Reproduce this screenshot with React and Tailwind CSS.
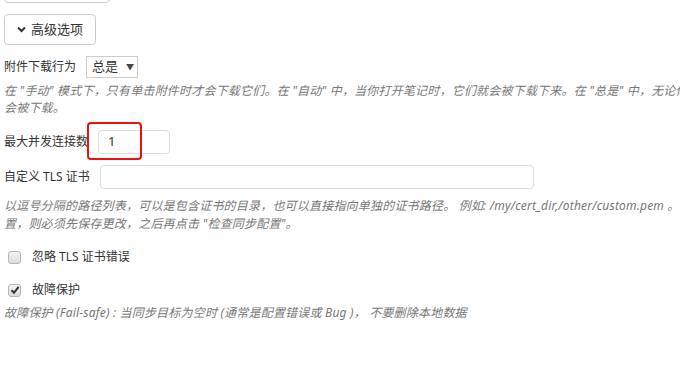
import React from "react";

const font = { fontFamily: '"Noto Sans", "Noto Sans CJK SC", sans-serif' };

const Checkbox = ({ checked }) => (
  <span className="w-[13px] h-[13px] rounded-[3px] border border-[#b5b5b5] bg-gradient-to-b from-[#f4f4f4] to-[#dcdcdc] flex items-center justify-center shrink-0">
    {checked && (
      <svg width="10" height="10" viewBox="0 0 10 10">
        <path d="M1.5 5.2 L4 7.8 L8.6 1.8" fill="none" stroke="#333" strokeWidth="2" />
      </svg>
    )}
  </span>
);

export default function App() {
  return (
    <div className="w-[680px] h-[366px] overflow-hidden bg-white text-[#333] text-[12px]" style={font}>
      <div className="w-[1000px] pl-1">
        {/* button cut off at the top */}
        <div className="mt-[-28px] h-[31px] w-[106px] border border-[#ccc] rounded bg-white" />

        <button className="mt-[11px] h-[31px] w-[92px] border border-[#ccc] rounded bg-white flex items-center pl-[12px] gap-[5px] text-[13px] text-[#333]">
          <svg width="9" height="7" viewBox="0 0 9 7">
            <path d="M1 1.5 L4.5 5 L8 1.5" fill="none" stroke="#333" strokeWidth="2" />
          </svg>
          高级选项
        </button>

        <div className="mt-[11px] flex items-center h-[22px]">
          <span>附件下载行为</span>
          <div className="ml-[10px] h-[22px] w-[52px] border border-[#ccc] bg-white flex items-center pl-[5px] gap-[8px]">
            <span className="text-[13px]">总是</span>
            <span className="text-[8px] text-[#444]">▼</span>
          </div>
        </div>

        <p className="mt-[4px] italic text-[#777] leading-[17px] tracking-[0.2px] whitespace-nowrap">
          在 "手动" 模式下，只有单击附件时才会下载它们。在 "自动" 中，当你打开笔记时，它们就会被下载下来。在 "总是" 中，无论你是否打开笔记，附件都
          <br />
          会被下载。
        </p>

        <div className="mt-[14px] flex items-center h-[24px]">
          <span>最大并发连接数</span>
          <div className="relative ml-[10px]">
            <div className="h-[24px] w-[72px] border border-[#ddd] rounded bg-white flex items-center pl-[9px] text-[13px]">1</div>
            <div className="absolute left-[-11px] top-[-8px] w-[55px] h-[38px] border-2 border-[#ee1111] rounded-[4px]" />
          </div>
        </div>

        <div className="mt-[11px] flex items-center h-[24px]">
          <span>自定义 TLS 证书</span>
          <div className="ml-[10px] h-[24px] w-[434px] border border-[#ddd] rounded bg-white" />
        </div>

        <p className="mt-[8px] italic text-[#777] leading-[18px] tracking-[0.2px] whitespace-nowrap">
          以逗号分隔的路径列表，可以是包含证书的目录，也可以直接指向单独的证书路径。 例如: /my/cert_dir,/other/custom.pem 。如果修改了此设
          <br />
          置，则必须先保存更改，之后再点击 "检查同步配置"。
        </p>

        <div className="mt-[14px] flex items-center h-[20px] pl-[4px] gap-[11px]">
          <Checkbox />
          <span>忽略 TLS 证书错误</span>
        </div>

        <div className="mt-[13px] flex items-center h-[20px] pl-[4px] gap-[11px]">
          <Checkbox checked />
          <span>故障保护</span>
        </div>

        <p className="mt-[4px] italic text-[#777] leading-[18px] tracking-[0.2px] whitespace-nowrap">
          故障保护 (Fail-safe) : 当同步目标为空时 (通常是配置错误或 Bug )， 不要删除本地数据
        </p>
      </div>
    </div>
  );
}
